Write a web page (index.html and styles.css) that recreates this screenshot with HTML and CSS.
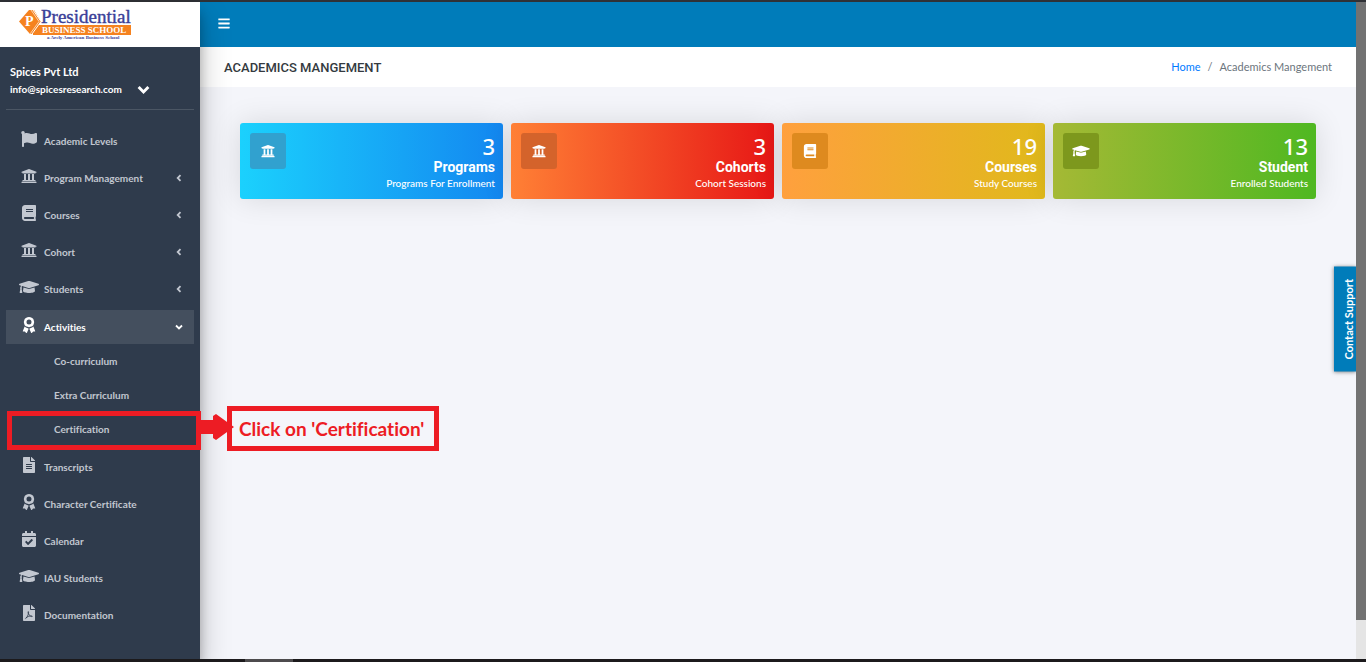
FILE: index.html
```html
<!DOCTYPE html>
<html lang="en">
<head>
    <meta charset="UTF-8">
    <meta name="viewport" content="width=device-width, initial-scale=1.0">
    <title>Academics Mangement</title>
    <link rel="stylesheet" href="styles.css">
</head>
<body>
    <!-- shared icon shapes -->
    <svg class="sprite" aria-hidden="true">
        <symbol id="flag" viewBox="0 0 512 512"><path d="M349.565 98.783C295.978 98.783 251.721 64 184.348 64c-24.955 0-47.309 4.384-68.045 12.013a55.947 55.947 0 0 0 3.586-23.562C118.117 24.015 94.806 1.206 66.338.048 34.345-1.254 8 24.296 8 56c0 19.026 9.497 35.825 24 45.945V488c0 13.255 10.745 24 24 24h16c13.255 0 24-10.745 24-24v-94.4c28.311-12.064 63.582-22.122 114.435-22.122 53.588 0 97.844 34.783 165.217 34.783 48.169 0 86.667-16.294 122.505-40.858C506.84 359.452 512 349.571 512 339.045v-243.1c0-23.393-24.269-38.87-45.485-29.016-34.338 15.948-76.454 31.854-116.95 31.854z"/></symbol>
        <symbol id="university" viewBox="0 0 512 512"><path d="M496 128v16a8 8 0 0 1-8 8h-24v12c0 6.627-5.373 12-12 12H60c-6.627 0-12-5.373-12-12v-12H24a8 8 0 0 1-8-8v-16a8 8 0 0 1 4.941-7.392l232-88a7.996 7.996 0 0 1 6.118 0l232 88A8 8 0 0 1 496 128zm-24 304H40c-13.255 0-24 10.745-24 24v16a8 8 0 0 0 8 8h464a8 8 0 0 0 8-8v-16c0-13.255-10.745-24-24-24zM96 192v192H60c-6.627 0-12 5.373-12 12v20h416v-20c0-6.627-5.373-12-12-12h-36V192h-64v192h-64V192h-64v192h-64V192H96z"/></symbol>
        <symbol id="book" viewBox="0 0 448 512"><path d="M448 360V24c0-13.3-10.7-24-24-24H96C43 0 0 43 0 96v320c0 53 43 96 96 96h328c13.3 0 24-10.7 24-24v-16c0-7.5-3.5-14.3-8.9-18.7-4.2-15.4-4.2-59.3 0-74.7 5.4-4.3 8.9-11.1 8.9-18.6zM128 134c0-3.3 2.7-6 6-6h212c3.3 0 6 2.7 6 6v20c0 3.3-2.7 6-6 6H134c-3.3 0-6-2.7-6-6v-20zm0 64c0-3.3 2.7-6 6-6h212c3.3 0 6 2.7 6 6v20c0 3.3-2.7 6-6 6H134c-3.3 0-6-2.7-6-6v-20zm253.4 250H96c-17.7 0-32-14.3-32-32 0-17.6 14.4-32 32-32h285.4c-1.9 17.1-1.9 46.9 0 64z"/></symbol>
        <symbol id="cap" viewBox="0 0 640 512"><path d="M622.34 153.2L343.4 67.5c-15.2-4.67-31.6-4.67-46.79 0L17.66 153.2c-23.54 7.23-23.54 38.36 0 45.59l48.63 14.94c-10.67 13.19-17.23 29.28-17.88 46.9C38.78 266.15 32 276.11 32 288c0 10.78 5.68 19.85 13.86 25.65L20.33 428.53C18.11 438.52 25.71 448 35.94 448h56.11c10.24 0 17.84-9.48 15.62-19.47L82.14 313.65C90.32 307.85 96 298.78 96 288c0-11.57-6.47-21.25-15.66-26.87.76-15.02 8.44-28.3 20.69-36.72L296.6 284.5c9.06 2.78 26.44 6.25 46.79 0l278.95-85.7c23.55-7.24 23.55-38.36 0-45.6zM352.79 315.09c-28.53 8.76-52.84 3.92-65.59 0l-145.02-44.55L128 384c0 35.35 85.96 64 192 64s192-28.65 192-64l-14.18-113.47-145.03 44.56z"/></symbol>
        <symbol id="award" viewBox="0 0 384 512"><path fill-rule="evenodd" d="M192 0l48 10 54 18 36 36 18 54 10 42-10 46-18 54-36 36-54 18-48 10-48-10-54-18-36-36-18-54-10-46 10-42 18-54 36-36 54-18zM192 80a80 80 0 1 0 0 160 80 80 0 1 0 0-160z"/><path d="M52 304l40 30 64 22 26 16-56 134c-4 9-17 11-25 3l-41-45-50 3c-12 1-20-10-15-21zM332 304l-40 30-64 22-26 16 56 134c4 9 17 11 25 3l41-45 50 3c12 1 20-10 15-21z"/></symbol>
        <symbol id="file" viewBox="0 0 384 512"><path d="M224 136V0H24C10.7 0 0 10.7 0 24v464c0 13.3 10.7 24 24 24h336c13.3 0 24-10.7 24-24V160H248c-13.2 0-24-10.8-24-24zm64 236c0 6.6-5.4 12-12 12H108c-6.6 0-12-5.4-12-12v-8c0-6.6 5.4-12 12-12h168c6.6 0 12 5.4 12 12v8zm0-64c0 6.6-5.4 12-12 12H108c-6.6 0-12-5.4-12-12v-8c0-6.6 5.4-12 12-12h168c6.6 0 12 5.4 12 12v8zm0-72v8c0 6.6-5.4 12-12 12H108c-6.6 0-12-5.4-12-12v-8c0-6.6 5.4-12 12-12h168c6.6 0 12 5.4 12 12zm96-114.1v6.1H256V0h6.1c6.4 0 12.5 2.5 17 7l97.9 98c4.5 4.5 7 10.6 7 16.9z"/></symbol>
        <symbol id="pdf" viewBox="0 0 384 512"><path d="M224 136V0H24C10.7 0 0 10.7 0 24v464c0 13.3 10.7 24 24 24h336c13.3 0 24-10.7 24-24V160H248c-13.2 0-24-10.8-24-24zM384 121.900v6.100H256V0h6.100c6.400 0 12.500 2.500 17 7l97.900 98c4.500 4.500 7 10.600 7 16.900z"/><path d="M88 430c28-8 90-112 92-206 0-20-22-16-20 6 6 70 62 130 120 142 26 2 24-24-4-24-60 0-130 20-180 60-16 14-20 24-8 22z" fill="none" stroke="#2f3b4c" stroke-width="26"/></symbol>
        <symbol id="calendar" viewBox="0 0 448 512"><path d="M436 160H12c-6.627 0-12-5.373-12-12v-36c0-26.51 21.49-48 48-48h48V12c0-6.627 5.373-12 12-12h40c6.627 0 12 5.373 12 12v52h128V12c0-6.627 5.373-12 12-12h40c6.627 0 12 5.373 12 12v52h48c26.51 0 48 21.49 48 48v36c0 6.627-5.373 12-12 12zM12 192h424c6.627 0 12 5.373 12 12v260c0 26.51-21.49 48-48 48H48c-26.51 0-48-21.49-48-48V204c0-6.627 5.373-12 12-12zm333.296 95.947l-28.169-28.398c-4.667-4.705-12.265-4.736-16.97-.068L194.12 364.665l-45.98-46.352c-4.667-4.705-12.266-4.736-16.971-.068l-28.397 28.17c-4.705 4.667-4.736 12.265-.068 16.97l82.601 83.269c4.667 4.705 12.265 4.736 16.97.068l142.953-141.805c4.705-4.667 4.736-12.265.068-16.97z"/></symbol>
        <symbol id="bars" viewBox="0 0 448 512"><path d="M16 132h416c8.837 0 16-7.163 16-16V76c0-8.837-7.163-16-16-16H16C7.163 60 0 67.163 0 76v40c0 8.837 7.163 16 16 16zm0 160h416c8.837 0 16-7.163 16-16v-40c0-8.837-7.163-16-16-16H16c-8.837 0-16 7.163-16 16v40c0 8.837 7.163 16 16 16zm0 160h416c8.837 0 16-7.163 16-16v-40c0-8.837-7.163-16-16-16H16c-8.837 0-16 7.163-16 16v40c0 8.837 7.163 16 16 16z"/></symbol>
        <symbol id="left" viewBox="0 0 8 8"><path d="M5.500 1.200L2.700 4l2.800 2.800" fill="none" stroke="currentColor" stroke-width="1.800"/></symbol>
        <symbol id="down" viewBox="0 0 8 8"><path d="M1 2.500l3 3 3-3" fill="none" stroke="currentColor" stroke-width="1.800"/></symbol>
    </svg>

    <div class="window-edge"></div>
    <div class="app">
        <aside class="sidebar">
            <a class="brand" href="#" aria-label="Presidential Business School">
                <svg width="120" height="36" viewBox="0 -2 120 36">
                    <path d="M14 16h98v10H14z" fill="#f5821f"/>
                    <path d="M0 12.500L10 1h5l7 11.500L14 25h-3z" fill="#f5821f"/>
                    <path d="M14 1l8 11.500L13 25" fill="none" stroke="#fff" stroke-width="1"/>
                    <path d="M12 1l8 11.500L11 25" fill="none" stroke="#fbd3ad" stroke-width="1"/>
                    <text x="6" y="17" class="logo-letter">P</text>
                    <text x="22" y="14" class="logo-name">Presidential</text>
                    <text x="23" y="24" class="logo-school">BUSINESS SCHOOL</text>
                    <text x="28" y="30" class="logo-tag">a Arcly American Business School</text>
                </svg>
            </a>
            <div class="profile">
                <div class="profile-name">Spices Pvt Ltd</div>
                <button class="profile-mail" type="button">info@spicesresearch.com <svg><use href="#down"/></svg></button>
            </div>
            <ul class="menu">
                <li><a href="#"><svg class="icon"><use href="#flag"/></svg><span>Academic Levels</span></a></li>
                <li><a href="#"><svg class="icon"><use href="#university"/></svg><span>Program Management</span><svg class="arrow"><use href="#left"/></svg></a></li>
                <li><a href="#"><svg class="icon"><use href="#book"/></svg><span>Courses</span><svg class="arrow"><use href="#left"/></svg></a></li>
                <li><a href="#"><svg class="icon"><use href="#university"/></svg><span>Cohort</span><svg class="arrow"><use href="#left"/></svg></a></li>
                <li><a href="#"><svg class="icon"><use href="#cap"/></svg><span>Students</span><svg class="arrow"><use href="#left"/></svg></a></li>
                <li class="open">
                    <a class="active" href="#"><svg class="icon"><use href="#award"/></svg><span>Activities</span><svg class="arrow"><use href="#down"/></svg></a>
                    <ul class="submenu">
                        <li><a href="#">Co-curriculum</a></li>
                        <li><a href="#">Extra Curriculum</a></li>
                        <li class="marked">
                            <a href="#">Certification</a>
                            <div class="marker"></div>
                            <svg class="pointer" viewBox="0 0 34 26"><path d="M0 6h13V2l3-2 18 13-18 13-3-2v-4H0z" fill="#ed1c24"/></svg>
                            <div class="callout">Click on 'Certification'</div>
                        </li>
                    </ul>
                </li>
                <li><a href="#"><svg class="icon"><use href="#file"/></svg><span>Transcripts</span></a></li>
                <li><a href="#"><svg class="icon"><use href="#award"/></svg><span>Character Certificate</span></a></li>
                <li><a href="#"><svg class="icon"><use href="#calendar"/></svg><span>Calendar</span></a></li>
                <li><a href="#"><svg class="icon"><use href="#cap"/></svg><span>IAU Students</span></a></li>
                <li><a href="#"><svg class="icon"><use href="#pdf"/></svg><span>Documentation</span></a></li>
            </ul>
        </aside>

        <main class="main">
            <header class="topbar">
                <button type="button" aria-label="Toggle menu"><svg><use href="#bars"/></svg></button>
            </header>
            <div class="titlebar">
                <h1>ACADEMICS MANGEMENT</h1>
                <nav class="breadcrumb"><a href="#">Home</a><span>/</span><span>Academics Mangement</span></nav>
            </div>
            <section class="cards">
                <div class="card blue">
                    <div class="card-icon"><svg><use href="#university"/></svg></div>
                    <div class="card-text"><strong>3</strong><h2>Programs</h2><p>Programs For Enrollment</p></div>
                </div>
                <div class="card red">
                    <div class="card-icon"><svg><use href="#university"/></svg></div>
                    <div class="card-text"><strong>3</strong><h2>Cohorts</h2><p>Cohort Sessions</p></div>
                </div>
                <div class="card amber">
                    <div class="card-icon"><svg><use href="#book"/></svg></div>
                    <div class="card-text"><strong>19</strong><h2>Courses</h2><p>Study Courses</p></div>
                </div>
                <div class="card green">
                    <div class="card-icon"><svg><use href="#cap"/></svg></div>
                    <div class="card-text"><strong>13</strong><h2>Student</h2><p>Enrolled Students</p></div>
                </div>
            </section>
            <button class="support" type="button">Contact Support</button>
        </main>
        <div class="scrollbar"><div class="thumb"></div></div>
    </div>
    <div class="taskbar"><div class="task"></div></div>
</body>
</html>
```
FILE: styles.css
```css
* {
    box-sizing: border-box;
    margin: 0;
    padding: 0;
}
body {
    display: flex;
    flex-direction: column;
    min-height: 100vh;
    background: #f4f5fa;
    font-family: Lato, sans-serif;
    font-size: 11px;
    font-variant-ligatures: none;
    overflow: hidden;
}
a {
    text-decoration: none;
}
button {
    border: none;
    background: none;
    font-family: inherit;
    cursor: pointer;
}
ul {
    list-style: none;
}
svg {
    fill: currentColor;
}
.sprite {
    position: absolute;
    width: 0;
    height: 0;
}
.window-edge {
    height: 2px;
    background: #2f3136;
}
.app {
    display: flex;
    flex: 1;
}

/* Sidebar */
.sidebar {
    position: relative;
    z-index: 2;
    width: 200px;
    flex-shrink: 0;
    background: #2f3b4c;
    color: #c2c7d0;
    box-shadow: 0 14px 28px rgba(0, 0, 0, 0.25), 0 10px 10px rgba(0, 0, 0, 0.22);
}
.brand {
    display: block;
    height: 45px;
    padding: 5px 19px;
    background: #fff;
}
.brand svg {
    display: block;
}
.logo-letter {
    font: bold 14px "Liberation Serif", serif;
    fill: #fff;
}
.logo-name {
    font: 19px "Liberation Serif", serif;
    fill: #3b3f98;
    stroke: #3b3f98;
    stroke-width: 0.4px;
}
.logo-school {
    font: bold 9px "Liberation Serif", serif;
    fill: #fff;
}
.logo-tag {
    font: bold 5px "Liberation Serif", serif;
    fill: #3b3f98;
}
.profile {
    margin: 0 6px;
    padding: 16px 4px 11px;
    border-bottom: 1px solid #4b5664;
    color: #fff;
    font-weight: 700;
}
.profile-name {
    font-size: 11px;
    line-height: 18px;
}
.profile-mail {
    display: flex;
    align-items: center;
    gap: 15px;
    color: #fff;
    font-size: 10px;
    font-weight: 700;
    line-height: 17px;
}
.profile-mail svg {
    width: 13px;
    height: 13px;
}
.menu {
    display: flex;
    flex-direction: column;
    gap: 3px;
    padding: 14px 6px;
}
.menu a {
    display: flex;
    align-items: center;
    gap: 5px;
    height: 34px;
    padding: 0 11px 0 13px;
    color: #c2c7d0;
    font-size: 10px;
    font-weight: 700;
}
.menu .icon {
    width: 20px;
    height: 16px;
    margin-bottom: 4px;
}
.menu .arrow {
    width: 8px;
    height: 8px;
    margin-left: auto;
}
.open {
    padding: 1px 0;
}
.menu .active {
    background: #444f5e;
    color: #fff;
}
.menu .submenu a {
    padding-left: 48px;
}

/* Highlight over the Certification entry */
.marked {
    position: relative;
}
.marker {
    position: absolute;
    inset: -1px -7px -4px 1px;
    border: 5px solid #ed1c24;
}
.pointer {
    position: absolute;
    top: 2px;
    left: 194px;
    width: 34px;
    height: 26px;
}
.callout {
    position: absolute;
    top: -6px;
    left: 221px;
    padding: 0 10px 0 7px;
    border: 5px solid #ed1c24;
    color: #ed1c24;
    font-size: 19px;
    font-weight: 700;
    line-height: 35px;
    white-space: nowrap;
}

/* Main area */
.main {
    position: relative;
    flex: 1;
}
.topbar {
    display: flex;
    align-items: center;
    height: 45px;
    padding: 0 18px 3px;
    background: #007cba;
}
.topbar button {
    color: #fff;
}
.topbar svg {
    display: block;
    width: 12px;
    height: 13px;
}
.titlebar {
    display: flex;
    align-items: center;
    justify-content: space-between;
    height: 40px;
    padding: 0 24px;
    background: #fff;
}
.titlebar h1 {
    color: #343a40;
    font-family: Roboto, sans-serif;
    font-size: 13px;
    font-weight: 500;
}
.breadcrumb {
    display: flex;
    gap: 7px;
    padding-bottom: 2px;
    color: #6c757d;
    font-size: 11px;
}
.breadcrumb a {
    color: #007bff;
}
.cards {
    display: grid;
    grid-template-columns: repeat(4, 1fr);
    gap: 8px;
    padding: 36px 40px;
}
.card {
    display: flex;
    justify-content: space-between;
    padding: 10px 8px 7px 10px;
    border-radius: 3px;
    color: #fff;
    box-shadow: 0 0 30px rgba(0, 0, 0, 0.12);
}
.card-icon {
    display: flex;
    align-items: center;
    justify-content: center;
    width: 36px;
    height: 36px;
    border-radius: 3px;
}
.card-icon svg {
    width: 18px;
    height: 14px;
}
.card-text {
    text-align: right;
}
.card-text strong {
    display: block;
    font-family: "Noto Sans", sans-serif;
    font-size: 22px;
    font-weight: 500;
    line-height: 27px;
}
.card-text h2 {
    font-family: Roboto, sans-serif;
    font-size: 14px;
    font-weight: 700;
    line-height: 15px;
}
.card-text p {
    font-size: 10px;
    font-weight: 500;
    line-height: 17px;
}
.blue {
    background: linear-gradient(to right, #1bd1fd, #1387f0);
}
.blue .card-icon {
    background: #31a1cf;
}
.red {
    background: linear-gradient(to right, #ff8035, #e71716);
}
.red .card-icon {
    background: #d4632b;
}
.amber {
    background: linear-gradient(to right, #ffa03e, #e0b91b);
}
.amber .card-icon {
    background: #de8a1f;
}
.green {
    background: linear-gradient(to right, #a5b935, #4fb821);
}
.green .card-icon {
    background: #7d981d;
}
.support {
    position: absolute;
    top: 265px;
    right: 0;
    padding: 12px 7px 12px 0;
    background: #007cba;
    color: #fff;
    font-size: 11px;
    font-weight: 700;
    line-height: 15px;
    writing-mode: vertical-rl;
    transform: rotate(180deg);
    box-shadow: 0 0 4px rgba(0, 0, 0, 0.5);
}

/* Window chrome */
.scrollbar {
    position: relative;
    z-index: 3;
    width: 10px;
    background: #e5e5e5;
}
.thumb {
    height: 94%;
    background: #727272;
}
.taskbar {
    position: relative;
    z-index: 3;
    height: 3px;
    padding-left: 245px;
    background: #1c1a1c;
}
.task {
    width: 48px;
    height: 3px;
    background: #4d4b4d;
}
```
